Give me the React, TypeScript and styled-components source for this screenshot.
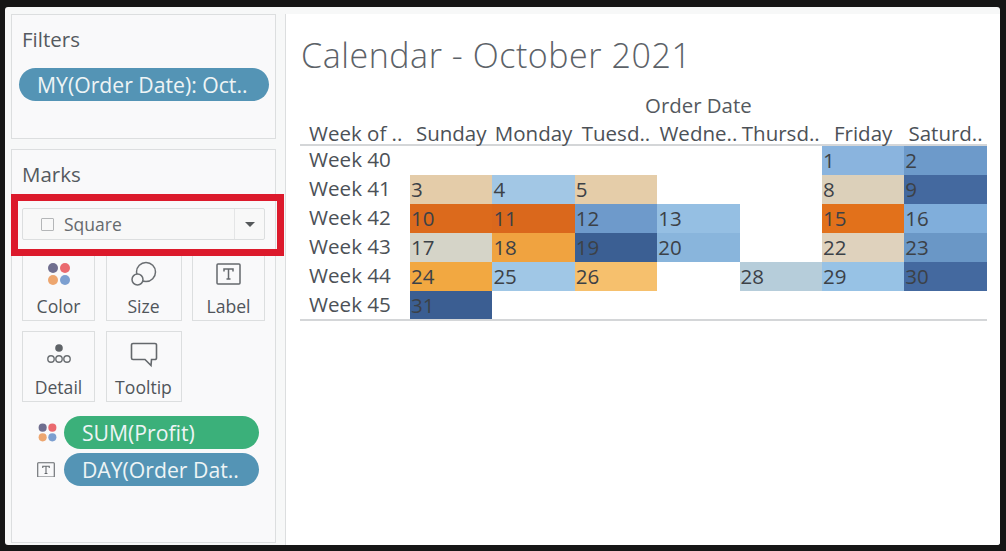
import React from 'react';
import styled, { createGlobalStyle } from 'styled-components';

const GlobalStyle = createGlobalStyle`
  html, body {
    margin: 0;
    padding: 0;
    background: #161616;
  }
  * {
    box-sizing: border-box;
  }
`;

const Frame = styled.div`
  width: 1006px;
  height: 551px;
  padding: 7px 6px 6px 5px;
  background: #161616;
  font-family: 'Open Sans', 'Noto Sans', sans-serif;
  color: #4c5157;
  overflow: hidden;
`;

const Win = styled.div`
  height: 100%;
  display: flex;
  gap: 9px;
  padding: 7px 0 0 6px;
  background: #f7f8f8;
  border-radius: 3px;
  overflow: hidden;
`;

const Sidebar = styled.div`
  width: 265px;
  flex: none;
  display: flex;
  flex-direction: column;
  gap: 10px;
  padding-bottom: 2px;
`;

const Panel = styled.section<{ $grow?: boolean }>`
  position: relative;
  border: 1px solid #dcdedf;
  background: #f9f9fa;
  height: ${(p) => (p.$grow ? 'auto' : '125px')};
  flex: ${(p) => (p.$grow ? 1 : 'none')};
  padding: 12px 7px 0 7px;
`;

const PanelTitle = styled.div`
  font-size: 20.5px;
  line-height: 24px;
  padding-left: 3px;
  color: #555a60;
`;

const Pill = styled.div<{ $color: string; $width: number }>`
  width: ${(p) => p.$width}px;
  height: 33px;
  border-radius: 17px;
  background: ${(p) => p.$color};
  color: #eef4f5;
  font-size: 21.2px;
  line-height: 33px;
  padding-left: 18px;
  white-space: nowrap;
  overflow: hidden;
`;

const FilterPill = styled(Pill)`
  margin: 17px 0 0 0;
`;

const Dropdown = styled.div`
  margin: 22px 0 0 3px;
  width: 243px;
  height: 32px;
  display: flex;
  align-items: center;
  border: 1px solid #dcdedf;
  border-radius: 2px;
  background: #f8f8f8;
  font-size: 17.5px;
  color: #666a6e;
`;

const SquareMark = styled.span`
  width: 13px;
  height: 13px;
  margin: 0 10px 0 18px;
  border: 1.5px solid #b4b6b8;
  border-radius: 1px;
`;

const DropdownText = styled.span`
  flex: 1;
`;

const Caret = styled.span`
  width: 30px;
  height: 100%;
  display: flex;
  align-items: center;
  justify-content: center;
  border-left: 1px solid #e4e5e6;
  &::after {
    content: '';
    border-left: 5px solid transparent;
    border-right: 5px solid transparent;
    border-top: 5px solid #55585b;
  }
`;

const RedBox = styled.div`
  position: absolute;
  left: -1px;
  top: 44px;
  width: 273px;
  height: 62px;
  border: 7px solid #dc1a2c;
  pointer-events: none;
`;

const ShelfGrid = styled.div`
  margin: 10px 0 0 3px;
  display: grid;
  grid-template-columns: 73px 76px 73px;
  grid-auto-rows: 71px;
  column-gap: 10.5px;
  row-gap: 10px;
`;

const ShelfCard = styled.div`
  display: flex;
  flex-direction: column;
  align-items: center;
  justify-content: flex-end;
  border: 1px solid #dcdedf;
  background: #f9f9fa;
  padding-bottom: 2px;
`;

const ShelfIcon = styled.div`
  height: 30px;
  display: flex;
  align-items: center;
  justify-content: center;
  margin-bottom: 5px;
`;

const ShelfLabel = styled.div`
  font-size: 17.6px;
  line-height: 24px;
  color: #50555a;
`;

const FieldList = styled.div`
  margin: 14px 0 0 18px;
  display: flex;
  flex-direction: column;
  gap: 4px;
`;

const FieldRow = styled.div`
  display: flex;
  align-items: center;
`;

const FieldIcon = styled.div`
  width: 27px;
  display: flex;
  align-items: center;
  justify-content: flex-start;
`;

const Main = styled.main`
  flex: 1;
  background: #fff;
  border-left: 1px solid #dcdedf;
  padding: 18px 0 0 14px;
`;

const Title = styled.h1`
  margin: 0 0 0 1px;
  font-size: 34px;
  line-height: 46px;
  font-weight: 300;
  letter-spacing: 0.55px;
  color: #5c6268;
`;

const Table = styled.div`
  margin-top: 11px;
  width: 687px;
  display: grid;
  grid-template-columns: 110px repeat(7, 82.4px);
`;

const GroupHeader = styled.div`
  grid-column: 2 / -1;
  height: 28px;
  padding-top: 3px;
  text-align: center;
  font-size: 20.4px;
  line-height: 26px;
  font-weight: 500;
  color: #54595e;
`;

const ColHead = styled.div<{ $first?: boolean }>`
  height: 29px;
  padding-top: 3px;
  border-bottom: 2px solid #d4d6d8;
  font-size: 20.5px;
  line-height: 26px;
  white-space: nowrap;
  text-align: ${(p) => (p.$first ? 'left' : 'center')};
  padding-left: ${(p) => (p.$first ? '9px' : '0')};
`;

const RowHead = styled.div<{ $last?: boolean }>`
  height: ${(p) => (p.$last ? '30px' : '29px')};
  border-bottom: ${(p) => (p.$last ? '2px solid #d4d6d8' : '0')};
  font-size: 20.6px;
  line-height: 27px;
  padding-left: 9px;
`;

const Cell = styled.div<{ $bg?: string; $last?: boolean }>`
  height: ${(p) => (p.$last ? '30px' : '29px')};
  border-bottom: ${(p) => (p.$last ? '2px solid #d4d6d8' : '0')};
  background: ${(p) => p.$bg ?? 'transparent'};
  background-clip: padding-box;
  font-size: 20.5px;
  line-height: 29px;
  padding-left: 1px;
  color: #3c4147;
`;

type Day = [string, string] | null;

const days = ['Sunday', 'Monday', 'Tuesd..', 'Wedne..', 'Thursd..', 'Friday', 'Saturd..'];

const calendar: { week: string; cells: Day[] }[] = [
  {
    week: 'Week 40',
    cells: [null, null, null, null, null, ['1', '#8ab4de'], ['2', '#6d9aca']],
  },
  {
    week: 'Week 41',
    cells: [['3', '#e4cca9'], ['4', '#a2c7e5'], ['5', '#e5cda9'], null, null, ['8', '#dcd0ba'], ['9', '#44699f']],
  },
  {
    week: 'Week 42',
    cells: [['10', '#dc6a1c'], ['11', '#da681c'], ['12', '#6e9acb'], ['13', '#95bfe3'], null, ['15', '#e2711b'], ['16', '#80aedb']],
  },
  {
    week: 'Week 43',
    cells: [['17', '#d5d4c8'], ['18', '#f0a340'], ['19', '#3b5f93'], ['20', '#89b5dc'], null, ['22', '#dfd2bd'], ['23', '#6a97c6']],
  },
  {
    week: 'Week 44',
    cells: [['24', '#f2a841'], ['25', '#a0c7e6'], ['26', '#f6c06d'], null, ['28', '#b6cdda'], ['29', '#97c2e5'], ['30', '#44699f']],
  },
  {
    week: 'Week 45',
    cells: [['31', '#3b5e92'], null, null, null, null, null, null],
  },
];

function ColorDots({ size = 26 }: { size?: number }) {
  return (
    <svg width={size} height={size} viewBox="0 0 26 26">
      <circle cx="7" cy="7" r="5" fill="#6f6e8f" />
      <circle cx="19" cy="7" r="5" fill="#ea6a6f" />
      <circle cx="7" cy="19" r="5" fill="#eda66f" />
      <circle cx="19" cy="19" r="5" fill="#7c9fd0" />
    </svg>
  );
}

function SizeIcon() {
  return (
    <svg width="28" height="28" viewBox="0 0 28 28" fill="none" stroke="#6a6e72" strokeWidth="1.5">
      <circle cx="16" cy="12" r="9.5" />
      <circle cx="7.5" cy="19.5" r="5.5" fill="#f9f9fa" />
    </svg>
  );
}

function LabelIcon({ size = 25 }: { size?: number }) {
  return (
    <svg width={size} height={size * 0.88} viewBox="0 0 25 22" fill="none">
      <rect x="1" y="1" width="23" height="20" rx="1" stroke="#64686c" strokeWidth="1.5" />
      <path d="M8 8.5V6h9v2.5M12.5 6v10M10.5 16h4" stroke="#64686c" strokeWidth="1.5" />
    </svg>
  );
}

function DetailIcon() {
  return (
    <svg width="28" height="26" viewBox="0 0 28 26" fill="none" stroke="#6a6e72" strokeWidth="1.4">
      <circle cx="14" cy="6" r="3.8" fill="#5f6367" stroke="none" />
      <circle cx="6" cy="17" r="3.2" />
      <circle cx="14" cy="17" r="3.2" />
      <circle cx="22" cy="17" r="3.2" />
    </svg>
  );
}

function TooltipIcon() {
  return (
    <svg width="28" height="26" viewBox="0 0 28 26" fill="none">
      <path
        d="M3 1.5h22a1.5 1.5 0 0 1 1.5 1.5v13a1.5 1.5 0 0 1-1.5 1.5h-3.5l-.5 6-6-6H3A1.5 1.5 0 0 1 1.5 16V3A1.5 1.5 0 0 1 3 1.5z"
        stroke="#64686c"
        strokeWidth="1.6"
      />
    </svg>
  );
}

function App() {
  return (
    <Frame>
      <GlobalStyle />
      <Win>
        <Sidebar>
          <Panel>
            <PanelTitle>Filters</PanelTitle>
            <FilterPill $color="#5494b5" $width={250}>
              MY(Order Date): Oct..
            </FilterPill>
          </Panel>
          <Panel $grow>
            <PanelTitle>Marks</PanelTitle>
            <Dropdown>
              <SquareMark />
              <DropdownText>Square</DropdownText>
              <Caret />
            </Dropdown>
            <ShelfGrid>
              <ShelfCard>
                <ShelfIcon><ColorDots /></ShelfIcon>
                <ShelfLabel>Color</ShelfLabel>
              </ShelfCard>
              <ShelfCard>
                <ShelfIcon><SizeIcon /></ShelfIcon>
                <ShelfLabel>Size</ShelfLabel>
              </ShelfCard>
              <ShelfCard>
                <ShelfIcon><LabelIcon /></ShelfIcon>
                <ShelfLabel>Label</ShelfLabel>
              </ShelfCard>
              <ShelfCard>
                <ShelfIcon><DetailIcon /></ShelfIcon>
                <ShelfLabel>Detail</ShelfLabel>
              </ShelfCard>
              <ShelfCard>
                <ShelfIcon><TooltipIcon /></ShelfIcon>
                <ShelfLabel>Tooltip</ShelfLabel>
              </ShelfCard>
            </ShelfGrid>
            <FieldList>
              <FieldRow>
                <FieldIcon><ColorDots size={21} /></FieldIcon>
                <Pill $color="#3bb07a" $width={195}>SUM(Profit)</Pill>
              </FieldRow>
              <FieldRow>
                <FieldIcon><LabelIcon size={18} /></FieldIcon>
                <Pill $color="#5494b5" $width={195}>DAY(Order Dat..</Pill>
              </FieldRow>
            </FieldList>
            <RedBox />
          </Panel>
        </Sidebar>
        <Main>
          <Title>Calendar - October 2021</Title>
          <Table>
            <GroupHeader>Order Date</GroupHeader>
            <ColHead $first>Week of ..</ColHead>
            {days.map((d) => (
              <ColHead key={d}>{d}</ColHead>
            ))}
            {calendar.map((row, r) => {
              const last = r === calendar.length - 1;
              return (
                <React.Fragment key={row.week}>
                  <RowHead $last={last}>{row.week}</RowHead>
                  {row.cells.map((c, i) => (
                    <Cell key={i} $bg={c ? c[1] : undefined} $last={last}>
                      {c ? c[0] : ''}
                    </Cell>
                  ))}
                </React.Fragment>
              );
            })}
          </Table>
        </Main>
      </Win>
    </Frame>
  );
}

export default App;
